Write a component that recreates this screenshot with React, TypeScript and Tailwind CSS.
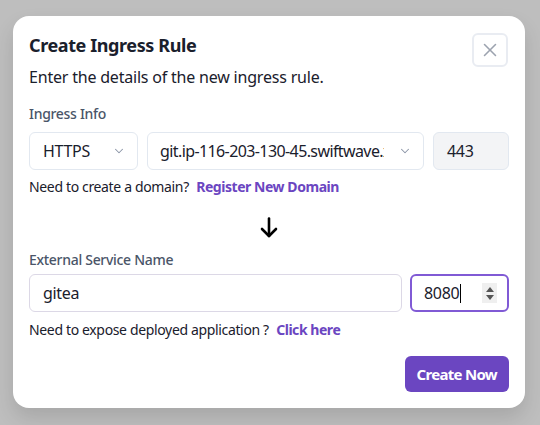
import React from "react";
import { ChevronDown, X } from "lucide-react";

export default function App() {
  return (
    <div
      className="w-[540px] h-[425px] bg-[#bebebe] pt-4 pl-[13px] overflow-hidden tracking-[-0.3px]"
      style={{ fontFamily: '"Noto Sans", "DejaVu Sans", sans-serif' }}
    >
      <div className="relative w-[512px] rounded-2xl bg-white shadow-[0_10px_20px_rgba(0,0,0,0.12)] px-4 pt-[15px] pb-4">
        <button className="absolute top-[17px] right-[17px] w-[36px] h-[34px] rounded-md border-2 border-[#e9ecf2] flex items-center justify-center text-[#9ca3af]">
          <X size={22} strokeWidth={1.7} />
        </button>
        <h2 className="text-[18px] leading-[28px] font-bold text-[#1a202c] tracking-[-0.4px]">Create Ingress Rule</h2>
        <p className="mt-[6px] text-[16px] leading-[24px] text-[#1a202c] tracking-[-0.2px]">Enter the details of the new ingress rule.</p>

        <div className="mt-[15px] text-[14px] leading-[20px] font-medium text-[#4a5568]">Ingress Info</div>
        <div className="mt-2 flex gap-[9px] h-[38px]">
          <div className="w-[109px] rounded-md border border-[#e2e8f0] flex items-center pl-[13px] pr-[11px] text-[16px] text-[#1a202c]">
            <span className="flex-1">HTTPS</span>
            <ChevronDown size={14} className="text-[#8a94a6]" strokeWidth={1.8} />
          </div>
          <div className="w-[277px] rounded-md border border-[#e2e8f0] flex items-center pl-[12px] pr-[11px] text-[16px] text-[#1a202c]">
            <span className="flex-1 overflow-hidden whitespace-nowrap mr-[14px] tracking-[-0.6px]">git.ip-116-203-130-45.swiftwave.xyz</span>
            <ChevronDown size={14} className="text-[#8a94a6] shrink-0" strokeWidth={1.8} />
          </div>
          <div className="flex-1 rounded-md border border-[#e2e8f0] bg-[#f3f4f6] flex items-center pl-[13px] text-[16px] text-[#1a202c]">
            443
          </div>
        </div>
        <div className="mt-[7px] text-[14px] leading-[20px] text-[#1a202c] tracking-[-0.35px]">
          Need to create a domain?{" "}
          <span className="ml-1 font-bold text-[#6b46c1] tracking-[-0.45px]">Register New Domain</span>
        </div>

        <div className="mt-[20px] flex justify-center">
          <svg width="18" height="21" viewBox="0 0 18 21" fill="none" stroke="#000" strokeWidth="2.6" strokeLinecap="round" strokeLinejoin="round">
            <path d="M9 1.5 V19" />
            <path d="M2 12 L9 19 L16 12" />
          </svg>
        </div>

        <div className="mt-[12px] text-[14px] leading-[20px] font-medium text-[#4a5568]">External Service Name</div>
        <div className="mt-1 flex gap-2 h-[38px]">
          <div className="flex-1 rounded-md border border-[#dcd8e6] flex items-center pl-[13px] text-[16px] text-[#1a202c]">
            gitea
          </div>
          <div className="w-[99px] rounded-md border-2 border-[#805ad5] flex items-center pl-[12px] pr-[10px] text-[16px] text-[#1a202c]">
            <span className="flex-1 flex items-center">
              8080
              <span className="inline-block w-px h-[19px] bg-black ml-px" />
            </span>
            <div className="w-[15px] h-[20px] bg-[#efefef] flex flex-col items-center justify-center gap-[3px]">
              <svg width="8" height="5" viewBox="0 0 8 5"><path d="M4 0 L8 5 L0 5 Z" fill="#555" /></svg>
              <svg width="8" height="5" viewBox="0 0 8 5"><path d="M0 0 L8 0 L4 5 Z" fill="#555" /></svg>
            </div>
          </div>
        </div>
        <div className="mt-2 text-[14px] leading-[20px] text-[#1a202c] tracking-[-0.35px]">
          Need to expose deployed application ?{" "}
          <span className="ml-1 font-bold text-[#6b46c1] tracking-[-0.45px]">Click here</span>
        </div>

        <div className="mt-4 flex justify-end">
          <button className="h-[36px] px-[12px] rounded-md bg-[#6b46c1] text-white font-bold text-[15px] tracking-[-0.7px]">Create Now</button>
        </div>
      </div>
    </div>
  );
}
